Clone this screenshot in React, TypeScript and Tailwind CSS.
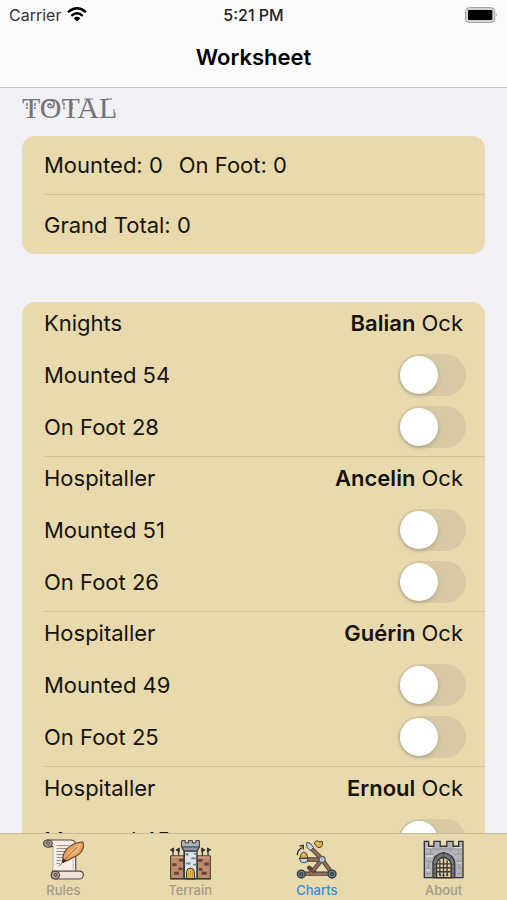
import { useState, type ReactNode } from "react";

type Unit = { order: string; name: string; mounted: number; foot: number };

const units: Unit[] = [
  { order: "Knights", name: "Balian", mounted: 54, foot: 28 },
  { order: "Hospitaller", name: "Ancelin", mounted: 51, foot: 26 },
  { order: "Hospitaller", name: "Guérin", mounted: 49, foot: 25 },
  { order: "Hospitaller", name: "Ernoul", mounted: 45, foot: 23 },
];

function WifiIcon() {
  return (
    <svg viewBox="0 0 60 44" className="h-[15px] w-5" aria-hidden="true">
      <g fill="none" stroke="#000" strokeWidth="7">
        <path d="M3 15 Q30 -8 57 15" />
        <path d="M13 26 Q30 11 47 26" />
      </g>
      <path d="M20 33 Q30 25 40 33 L30 43Z" />
    </svg>
  );
}

function BatteryIcon() {
  return (
    <svg viewBox="0 0 99 48" className="h-4 w-[33px]" aria-hidden="true">
      <rect x="1.500" y="1.500" width="88" height="45" rx="12" fill="#d2d2d3" stroke="#a4a4a6" strokeWidth="3" />
      <rect x="9" y="9" width="73" height="30" rx="4" />
      <path d="M94 18q5 6 0 12z" fill="#a4a4a6" />
    </svg>
  );
}

/* Swirl and drops that ornament the section heading. */
function HeadingOrnament() {
  return (
    <svg
      viewBox="0 0 96 22"
      className="pointer-events-none absolute top-[9px] left-0 h-[22px] w-24"
      fill="none"
      stroke="#737378"
      aria-hidden="true"
    >
      <path d="M22 6C25 1 34 3 32 8C31 12 25 11 26 8C27 6 30 7 29 9" strokeWidth="1.500" />
      <path d="M5 6v6M13 6v6M42 6v6M50 6v6" strokeWidth="1.500" strokeDasharray="3 1" />
      <path d="M62 2h9M84 2h6M92 12v5" strokeWidth="1" />
    </svg>
  );
}

function ScrollIcon() {
  return (
    <svg viewBox="129 57 124 124" className="size-[41px]" aria-hidden="true">
      <g stroke="#564a43" strokeWidth="3.500" strokeLinejoin="round" strokeLinecap="round">
        <path d="M143 60H214Q227 61 228 75V158H158V80H141Q131 79 131 70Q132 61 143 60Z" fill="#f8eee5" />
        <path d="M143 60Q157 60 157 71Q156 81 144 82Q132 81 131 70Q132 61 143 60Z" fill="#b9aaa0" />
        <path d="M138 71q1-6 7-5q6 2 3 7q-3 3-6 0" fill="none" />
        <path d="M165 154H241Q252 156 251 166Q250 177 239 178H166Q154 177 154 166Q155 155 165 154Z" fill="#efe0d6" />
        <path d="M165 154Q178 155 179 166Q177 178 166 178Q154 177 154 166Q155 155 165 154Z" fill="#bcaaa0" />
        <path d="M162 166q1-6 7-4q5 3 1 7q-4 2-6-1" fill="none" />
      </g>
      <path d="M158 82V151M220 100V151" stroke="#d4c4ba" strokeWidth="4" />
      <path d="M170 77H207M170 86H207M170 95H201M170 104H194M170 113H190M170 122H183M170 131H180" stroke="#83766e" strokeWidth="2.500" />
      <path d="M190 126C185 100 204 70 249 66C258 84 241 107 219 113C210 120 199 124 190 126Z" fill="#e9a15f" stroke="#614334" strokeWidth="3.500" />
      <path d="M196 117C210 91 225 80 245 70C241 93 220 107 196 117Z" fill="#f3b477" />
      <path d="M177 140L204 110L232 82" fill="none" stroke="#6d4a38" strokeWidth="2.500" />
      <path d="M190 116l10 7-10 7-5-6z" fill="#382f2b" />
    </svg>
  );
}

function CastleIcon() {
  return (
    <svg viewBox="120 57 124 124" className="size-[41px]" aria-hidden="true">
      <g stroke="#343639" strokeWidth="3" strokeLinejoin="round">
        <path d="M122 108H162V178H122ZM202 108H242V178H202Z" fill="#bc8c6e" />
        <path d="M129 108V86M146 108V86M218 108V86M235 108V86" fill="none" strokeWidth="4" />
        <path d="M131 84l-10 6 10 6zM148 84l-10 6 10 6zM216 84l10 6-10 6zM233 84l10 6-10 6z" fill="#39302d" />
        <path d="M155 62H166V69H176V62H188V69H198V62H209V82L202 94V178H162V94L155 82Z" fill="#aab5bf" />
        <path d="M164 94H201V177H164Z" fill="#dce4e8" />
        <path d="M157 81H207L202 93H162Z" fill="#8e9aa5" />
        <path d="M170 178V156Q171 145 182 145Q193 146 194 156V178Z" fill="#e8be3f" />
      </g>
      <path d="M124 112H160M204 112H240" stroke="#dda47e" strokeWidth="4" />
      <path d="M127 130h13v9h-13zM147 117h13v8h-13zM146 143h12v8h-12zM132 156h15v9h-15zM205 118h13v8h-13zM224 128h13v9h-13zM207 145h11v8h-11zM216 156h15v9h-15z" fill="#693f34" />
      <path d="M167 100h9v7h-9zM184 113h14v5h-14zM169 128h13v6h-13zM190 132h9v5h-9zM192 99h7v5h-7z" fill="#75808b" />
      <path d="M176 151V176M182 148V176M188 151V176" stroke="#b78d2b" strokeWidth="2" />
      <path d="M120 177H244" stroke="#393b3d" strokeWidth="4" />
    </svg>
  );
}

function CatapultIcon() {
  return (
    <svg viewBox="108 57 124 124" className="size-[41px]" aria-hidden="true">
      <g strokeLinecap="round" strokeLinejoin="round">
        <path d="M124 162H219M187 119L152 162M187 119L218 162M133 119H188M151 82L188 119M148 144L164 158" fill="none" stroke="#423932" strokeWidth="13" />
        <path d="M124 162H219M187 119L152 162M187 119L218 162M133 119H188M151 82L188 119" fill="none" stroke="#94705a" strokeWidth="8" />
        <path d="M146 144l15 13" stroke="#6b4837" strokeWidth="8" />
        <g stroke="#3c4143" strokeWidth="3">
          <path d="M142 67Q153 67 161 83L153 92Q139 86 140 73Z" fill="#c9d4da" />
          <path d="M119 116H145Q145 128 133 129Q119 128 119 116Z" fill="#c9d4da" />
          <path d="M164 68l7-6 7 3 9-1 2 9-6 9-9 1-7-7z" fill="#d9b03e" />
          <path d="M120 114l3-11 8-7 9 5 4 13z" fill="#d9b03e" />
        </g>
        <path d="M171 68l6-1-3 6zM128 104l6-3-3 7z" fill="#f6dc79" />
        <path d="M112 105Q112 91 125 84M120 78L130 76L130 87" fill="none" stroke="#302d28" strokeWidth="4" />
      </g>
      <g stroke="#303d42" strokeWidth="4">
        <circle cx="124" cy="163" r="12" fill="#718087" />
        <circle cx="217" cy="163" r="12" fill="#718087" />
        <circle cx="124" cy="163" r="4" fill="#bac7ca" />
        <circle cx="217" cy="163" r="4" fill="#bac7ca" />
      </g>
      <circle cx="187" cy="119" r="9" fill="#d0dadd" stroke="#596468" strokeWidth="4" />
      <circle cx="187" cy="119" r="2" fill="#596468" />
    </svg>
  );
}

function GateIcon() {
  return (
    <svg viewBox="98 57 124 124" className="size-[41px]" aria-hidden="true">
      <path d="M102 64H115V79H131V64H150V79H170V64H189V79H206V64H219V174H102Z" fill="#b5b5b9" stroke="#333438" strokeWidth="4" />
      <path d="M105 87H216M105 103H130M192 103H216M105 124H123M200 124H216M105 145H120M203 145H216M105 161H121M203 161H216M122 88V102M144 87V94M183 87V96M205 88V102M115 126V144M207 127V143" stroke="#8a8a90" strokeWidth="2.500" />
      <path d="M107 83H126M193 83H214M107 109H127M202 129H214M107 151H118" stroke="#dedee0" strokeWidth="4" />
      <path d="M128 174V127Q131 104 160 98Q190 104 194 128V174Z" fill="#76757b" stroke="#38383c" strokeWidth="4" />
      <path d="M139 174V132Q142 117 160 112Q180 117 183 132V174Z" fill="#e5d19e" stroke="#333237" strokeWidth="4" />
      <path d="M149 121V166M160 113V168M171 121V166M140 132H182M140 144H182M140 156H182" stroke="#3b383a" strokeWidth="4" />
      <path d="M147 164l3 6 3-6M157 166l3 6 3-6M168 164l3 6 3-6" stroke="#3b383a" strokeWidth="2" />
      <path d="M128 132l9 4M128 147h9M128 161h9M137 113l8 8M160 99v11M183 113l-7 8M185 135l9-4M185 148h9M185 161h9" stroke="#3f3f43" strokeWidth="2.500" />
    </svg>
  );
}

function ToggleRow({ id, label }: { id: string; label: string }) {
  const [on, setOn] = useState(false);
  return (
    <div className="flex h-[52px] items-center justify-between pr-[19px]">
      <label htmlFor={id}>{label}</label>
      <input
        id={id}
        type="checkbox"
        checked={on}
        onChange={() => setOn(!on)}
        className="h-[42px] w-[68px] shrink-0 cursor-pointer appearance-none rounded-full bg-[#d6c9a4] p-[2px] before:block before:size-[38px] before:rounded-full before:bg-white before:shadow-[0_2px_4px_rgba(0,0,0,0.18)] before:content-[''] checked:bg-green-500 checked:before:ml-[26px]"
      />
    </div>
  );
}

function Tab({ label, active, children }: { label: string; active?: boolean; children: ReactNode }) {
  return (
    <a
      href={"#" + label.toLowerCase()}
      aria-current={active ? "page" : undefined}
      className={
        "flex flex-1 flex-col items-center pt-[5px] text-[13px] leading-5 font-medium " +
        (active ? "text-[#3588df]" : "text-[#a49c88]")
      }
    >
      {children}
      {label}
    </a>
  );
}

export default function App() {
  return (
    <div className="flex h-screen flex-col overflow-hidden bg-[#f0f0f5] font-[Inter,sans-serif] text-[22px] leading-7 text-[#17130c]">
      <header className="shrink-0 border-b border-[#c9c9cc] bg-[#fbfbfd] text-black">
        <div className="grid h-[29px] grid-cols-3 items-center px-[9px] text-[16px] leading-5">
          <span className="flex items-center gap-[6px] text-[#333335]">
            Carrier
            <WifiIcon />
          </span>
          <time className="text-center font-medium text-[#222224]">5:21 PM</time>
          <span className="flex justify-end">
            <BatteryIcon />
          </span>
        </div>
        <h1 className="flex h-[58px] items-center justify-center pb-[2px] text-[22px] font-semibold">Worksheet</h1>
      </header>

      <main className="min-h-0 flex-1 overflow-y-auto px-[22px] [scrollbar-width:none]">
        <h2 className="relative h-12 pt-1 font-['Liberation_Serif',serif] text-[30px] leading-8 text-[#737378]">
          TOTAL
          <HeadingOrnament />
        </h2>

        <section className="mb-12 rounded-[13px] bg-[#e9daae] pl-[22px]">
          <p className="flex h-[59px] items-center gap-4 border-b border-[#cfc29b]">
            <span>Mounted: 0</span>
            <span>On Foot: 0</span>
          </p>
          <p className="flex h-[59px] items-center">Grand Total: 0</p>
        </section>

        <section className="rounded-[13px] bg-[#e9daae] pl-[22px]">
          {units.map((unit, i) => (
            <article key={unit.name} className="border-b border-[#cfc29b] pb-[3px]">
              <div className="mb-[6px] flex h-[41px] items-center justify-between pr-[22px]">
                <h3>{unit.order}</h3>
                <p>
                  <b className="font-semibold">{unit.name}</b> Ock
                </p>
              </div>
              <ToggleRow id={`mounted-${i}`} label={`Mounted ${unit.mounted}`} />
              <ToggleRow id={`foot-${i}`} label={`On Foot ${unit.foot}`} />
            </article>
          ))}
        </section>
      </main>

      <nav className="flex h-[67px] shrink-0 border-t border-[#c9bd98] bg-[#e9daae]">
        <Tab label="Rules">
          <ScrollIcon />
        </Tab>
        <Tab label="Terrain">
          <CastleIcon />
        </Tab>
        <Tab label="Charts" active>
          <CatapultIcon />
        </Tab>
        <Tab label="About">
          <GateIcon />
        </Tab>
      </nav>
    </div>
  );
}
